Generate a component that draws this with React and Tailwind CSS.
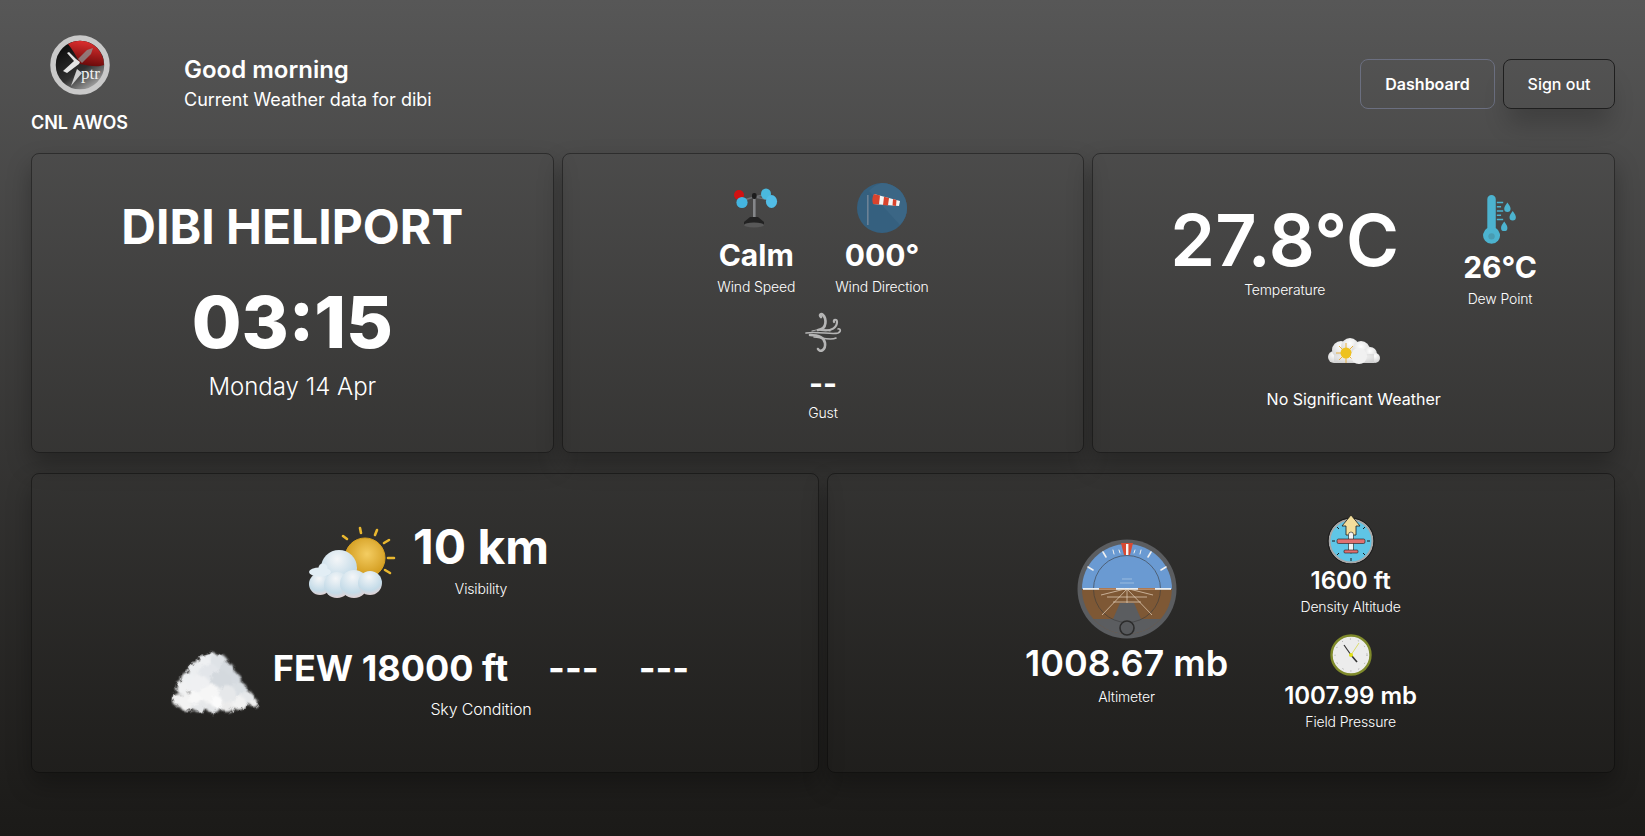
import React from 'react';

const Card = ({ className = '', children }) => (
  <div className={`h-[300px] rounded-lg border border-black/40 shadow-[0_12px_24px_rgba(0,0,0,0.28)] flex flex-col items-center justify-center ${className}`}>
    {children}
  </div>
);

const Label = ({ className = '', children }) => (
  <div className={`text-sm font-light tracking-[-0.01em] leading-5 text-white ${className}`}>{children}</div>
);

const Logo = () => (
  <svg width="60" height="60" viewBox="0 0 60 60">
    <defs>
      <linearGradient id="lgBase" x1="0.2" y1="0.1" x2="0.8" y2="1">
        <stop offset="0" stopColor="#0b0b0b" />
        <stop offset="0.55" stopColor="#303030" />
        <stop offset="1" stopColor="#c4c4c4" />
      </linearGradient>
      <linearGradient id="lgRed" x1="0.6" y1="0" x2="0.4" y2="1">
        <stop offset="0" stopColor="#e23030" />
        <stop offset="1" stopColor="#640808" />
      </linearGradient>
    </defs>
    <circle cx="30" cy="30" r="27" fill="url(#lgBase)" stroke="#c9c9c9" strokeWidth="5.5" />
    <path d="M18 9 A24 24 0 0 1 54 30 C46 33 38 30 30 29 C26 20 22 14 18 9 Z" fill="url(#lgRed)" />
    <path d="M28 24 L37 15 L43 13 L41 19 L32 28 Z" fill="#8e8e8e" opacity="0.8" />
    <path d="M13 36 L24 26 L17 18 L19 17 L26 24 L30 27 L29 29 L17 38 Z" fill="#e4e4e4" />
    <path d="M21 51 L27 34 L32 38 Z" fill="#cfcfcf" />
    <text x="31" y="44" fontFamily="'Liberation Serif', serif" fontSize="17" fill="#f0f0f0">ptr</text>
  </svg>
);

const Anemometer = () => (
  <svg width="44" height="40" viewBox="0 0 44 40">
    <rect x="19" y="7" width="2.6" height="24" fill="#85878a" />
    <path d="M7 13 L20 9 L34 6 M20 9 L37 12" stroke="#6e7073" strokeWidth="1.6" fill="none" />
    <ellipse cx="5" cy="7" rx="5" ry="5" fill="#cf1212" />
    <ellipse cx="8" cy="14.5" rx="5.6" ry="5.6" fill="#44b5e0" />
    <ellipse cx="32" cy="6" rx="5" ry="5.6" fill="#4ab9de" />
    <ellipse cx="37.5" cy="13.5" rx="5.6" ry="6.4" fill="#52bde6" />
    <rect x="18" y="5" width="4.6" height="6" rx="2" fill="#1c1c1c" />
    <path d="M16 29 H24 L30 34 V37 H10 V34 Z" fill="#222222" />
    <ellipse cx="20" cy="37" rx="10" ry="2.4" fill="#585858" />
  </svg>
);

const Windsock = () => (
  <svg width="50" height="50" viewBox="0 0 50 50">
    <circle cx="25" cy="25" r="25" fill="#35607f" />
    <path d="M25 0 A25 25 0 0 1 50 25 A25 25 0 0 1 43 42 L12 8 A25 25 0 0 1 25 0 Z" fill="#3b6685" />
    <rect x="10" y="12" width="1.6" height="30" fill="#6c8296" />
    <path d="M17 11 L43 18 L42 23 L16 21 Z" fill="#f4f4f4" />
    <path d="M17 11 C15 14 15 18 16 21 L22 21.5 L23 12.6 Z" fill="#d9432d" />
    <path d="M27 13.7 L26 22 L31 22.4 L32 15 Z" fill="#d9432d" />
    <path d="M36 16 L35.5 22.6 L39 22.9 L39.5 17 Z" fill="#d9432d" />
  </svg>
);

const Gusts = () => (
  <svg width="38" height="44" viewBox="0 0 38 44" fill="none" stroke="#b5b5b5" strokeLinecap="round">
    <path d="M14 21 C24 20 22 9 19 6 C17 4 15 6 17 8" strokeWidth="2.6" />
    <path d="M17 21 C28 23 33 18 33 13 C33 10 29 10 30 13" strokeWidth="2.2" />
    <path d="M2 24 C14 22 28 26 34 24 C38 22 36 19 34 20" strokeWidth="1.6" />
    <path d="M6 26 C14 26 20 28 21 34 C22 41 16 44 14 40" strokeWidth="2.6" />
    <path d="M8 22 C14 20 20 20 26 22" strokeWidth="1.2" />
    <path d="M10 28 C16 28 26 32 32 29" strokeWidth="1.6" />
  </svg>
);

const DewThermo = () => (
  <svg width="36" height="55" viewBox="0 0 34 52">
    <path d="M5 6 A4 4 0 0 1 13 6 V33 A8 8 0 1 1 5 33 Z" fill="#4cb3cf" />
    <circle cx="9" cy="41" r="3" fill="#3f3f3f" opacity="0.2" />
    <path d="M14 9 H20 M14 13 H18 M14 17 H20 M14 21 H18 M14 25 H20" stroke="#4cb3cf" strokeWidth="1.4" />
    <path d="M24 9 C26 12 27 13 27 15 A3 3 0 0 1 21 15 C21 13 22 12 24 9 Z" fill="#4cb3cf" />
    <path d="M29 17 C31 20 32 21 32 23 A3 3 0 0 1 26 23 C26 21 27 20 29 17 Z" fill="#4cb3cf" />
    <path d="M21 27 C23 30 24 31 24 33 A3 3 0 0 1 18 33 C18 31 19 30 21 27 Z" fill="#4cb3cf" />
  </svg>
);

const SunCloud = () => (
  <svg width="52" height="30" viewBox="0 0 52 30">
    <defs>
      <radialGradient id="sc1" cx="50%" cy="30%" r="70%">
        <stop offset="0" stopColor="#ffffff" />
        <stop offset="1" stopColor="#d2d2d2" />
      </radialGradient>
    </defs>
    <circle cx="6" cy="20" r="6" fill="url(#sc1)" />
    <circle cx="13" cy="13" r="9" fill="url(#sc1)" />
    <circle cx="22" cy="10" r="9" fill="url(#sc1)" />
    <circle cx="33" cy="13" r="9" fill="url(#sc1)" />
    <circle cx="42" cy="17" r="7" fill="url(#sc1)" />
    <circle cx="47" cy="21" r="5" fill="url(#sc1)" />
    <rect x="6" y="17" width="40" height="9" fill="url(#sc1)" />
    <g stroke="#e8a92c" strokeWidth="0.9">
      <path d="M18 6 V26 M8 16 H28 M11 9 L25 23 M25 9 L11 23" />
    </g>
    <circle cx="18" cy="16" r="5.5" fill="#eec21e" />
    <circle cx="31" cy="19" r="8" fill="#f1f1f1" />
  </svg>
);

const SunnyCloud3D = () => (
  <svg width="90" height="76" viewBox="0 0 90 76">
    <defs>
      <radialGradient id="sun" cx="55%" cy="40%" r="60%">
        <stop offset="0" stopColor="#f4cd62" />
        <stop offset="1" stopColor="#cf9718" />
      </radialGradient>
      <radialGradient id="c3" cx="45%" cy="25%" r="80%">
        <stop offset="0" stopColor="#f4f6f8" />
        <stop offset="0.7" stopColor="#c4dbe8" />
        <stop offset="1" stopColor="#e6cfcf" />
      </radialGradient>
      <filter id="softc"><feGaussianBlur stdDeviation="0.5" /></filter>
    </defs>
    <g stroke="#e9b72f" strokeWidth="2.6" strokeLinecap="round">
      <path d="M53 3 L54 8 M70 5 L68 10 M82 15 L77 18 M87 33 H81 M83 48 L78 45 M36 11 L40 14" />
    </g>
    <circle cx="58" cy="33" r="20" fill="url(#sun)" stroke="#d9a21f" strokeWidth="1" />
    <g filter="url(#softc)">
      <circle cx="32" cy="43" r="18" fill="url(#c3)" />
      <circle cx="13" cy="59" r="11" fill="url(#c3)" />
      <circle cx="30" cy="60" r="13" fill="url(#c3)" />
      <circle cx="47" cy="59" r="14" fill="url(#c3)" />
      <circle cx="63" cy="58" r="12" fill="url(#c3)" />
      <ellipse cx="13" cy="47" rx="11" ry="4.5" fill="#e2eef5" />
      <circle cx="16" cy="43" r="4.5" fill="#e2eef5" />
    </g>
  </svg>
);

// lumps of the big cloud: x, y, r, shade
const puffs = [
  [40, 9, 7, '#e9ecef'], [33, 13, 7, '#eef0f2'], [48, 12, 8, '#dfe3e7'], [56, 21, 8, '#d6dbe0'],
  [25, 21, 8, '#eceef0'], [62, 30, 8, '#d5dae0'], [17, 29, 7, '#eef0f2'], [12, 38, 7, '#f0f1f2'],
  [68, 40, 8, '#dadfe3'], [7, 50, 6, '#f2f2f2'], [76, 48, 7, '#e6e8ea'], [83, 53, 4, '#f0f0f0'],
  [16, 52, 9, '#f3f3f3'], [28, 54, 8, '#e6e8ea'], [42, 55, 8, '#e4e6e8'], [56, 54, 8, '#ebebeb'],
  [68, 53, 7, '#f2f2f2'], [38, 25, 11, '#e3e6ea'], [50, 32, 11, '#d4d9de'], [28, 36, 11, '#eff0f2'],
  [40, 44, 10, '#f6f6f6'], [56, 44, 9, '#e6e8ea'], [24, 48, 7, '#f8f8f8'], [46, 52, 6, '#fbfbfb'],
];

const FluffyCloud = () => (
  <svg width="90" height="68" viewBox="0 0 90 68">
    <defs>
      <filter id="fluff" x="-10%" y="-10%" width="120%" height="120%">
        <feGaussianBlur in="SourceGraphic" stdDeviation="1" result="soft" />
        <feTurbulence type="fractalNoise" baseFrequency="0.18" numOctaves="2" seed="4" result="noise" />
        <feDisplacementMap in="soft" in2="noise" scale="6" />
      </filter>
    </defs>
    <g filter="url(#fluff)">
      {puffs.map(([x, y, r, c], i) => (
        <circle key={i} cx={x} cy={y} r={r} fill={c} />
      ))}
    </g>
  </svg>
);

const Horizon = () => (
  <svg width="100" height="100" viewBox="0 0 100 100">
    <defs>
      <clipPath id="face"><circle cx="50" cy="50" r="45" /></clipPath>
    </defs>
    <circle cx="50" cy="50" r="49.5" fill="#5b5d60" />
    <g clipPath="url(#face)">
      <rect x="0" y="0" width="100" height="50" fill="#6a9ad2" />
      <rect x="0" y="50" width="100" height="50" fill="#7e5835" />
      <rect x="0" y="80" width="100" height="20" fill="#5b5d60" />
    </g>
    <circle cx="50" cy="50" r="33.5" fill="none" stroke="#3a3a3a" strokeWidth="0.6" />
    <rect x="6" y="49" width="88" height="1.8" fill="#e9eef2" />
    <rect x="22" y="49" width="17" height="1.8" fill="#b07a52" />
    <rect x="61" y="49" width="17" height="1.8" fill="#b07a52" />
    <g stroke="#f0f0f0" strokeLinecap="round">
      <path d="M16 31 L11 28 M84 31 L89 28" strokeWidth="1.6" />
      <path d="M29 18 L26 13 M71 18 L74 13" strokeWidth="1.6" />
      <path d="M37 15 L36 11 M63 15 L64 11 M43 14 L42 11 M57 14 L58 11" strokeWidth="1" />
    </g>
    <path d="M44 4 H56 L53 16 H47 Z" fill="#d84a33" />
    <rect x="49" y="5" width="2.4" height="11" fill="#f6f6f6" />
    <g stroke="#e6d4be" strokeWidth="0.7" fill="none">
      <path d="M50 50 L25 76 M50 50 L75 76 M50 50 V66 M30 58 H70 M24 56 L48 50 M76 56 L52 50 M36 63 H64" />
    </g>
    <path d="M43 64 H57 L64 80 H36 Z" fill="#5b5d60" />
    <g stroke="#a6c4e2" strokeWidth="0.8" fill="none">
      <path d="M45 40 H55 M43 44 H57" />
    </g>
    <circle cx="50" cy="89" r="7" fill="#57595c" stroke="#2c2c2c" strokeWidth="1.6" />
  </svg>
);

const DensityIcon = () => (
  <svg width="48" height="50" viewBox="0 0 48 50">
    <circle cx="24" cy="27" r="21.5" fill="#5fc5e6" stroke="#a8a8a8" strokeWidth="2" />
    <circle cx="24" cy="27" r="23" fill="none" stroke="#1a1a1a" strokeWidth="1" />
    <path d="M24 44 V47 M5 27 H8 M40 27 H43 M10 13 L12 15 M38 13 L36 15 M10 41 L12 39 M38 41 L36 39" stroke="#1a1a1a" strokeWidth="1" />
    <path d="M24 1 L33 12 H29 V21 H19 V12 H15 Z" fill="#f3de9c" stroke="#1a1a1a" strokeWidth="0.8" />
    <rect x="21.5" y="18" width="5" height="21" rx="2.5" fill="#f4f4f4" stroke="#1a1a1a" strokeWidth="0.6" />
    <rect x="10" y="25" width="28" height="4.5" rx="1.5" fill="#e07070" stroke="#1a1a1a" strokeWidth="0.6" />
    <rect x="17" y="36" width="14" height="3" rx="1" fill="#e07070" stroke="#1a1a1a" strokeWidth="0.6" />
  </svg>
);

const ClockGauge = () => (
  <svg width="42" height="42" viewBox="0 0 42 42">
    <circle cx="21" cy="21" r="19.5" fill="#ececec" stroke="#7f8a2b" strokeWidth="2.4" />
    <g stroke="#9a9a9a" strokeWidth="1" strokeDasharray="1 7.2">
      <circle cx="21" cy="21" r="16" fill="none" />
    </g>
    <path d="M21 21 L14 11" stroke="#333" strokeWidth="1.2" />
    <path d="M21 21 L27 28" stroke="#333" strokeWidth="1.6" />
    <path d="M21 21 L29 9" stroke="#d6d64a" strokeWidth="0.8" />
    <circle cx="21" cy="21" r="2" fill="#dfe012" />
  </svg>
);

export default function App() {
  return (
    <div className="min-h-screen h-[836px] overflow-hidden bg-gradient-to-b from-[#575757] to-[#1b1a18] text-white pl-[31px] pr-[30px] font-['Inter',sans-serif]">
      {/* Header */}
      <div className="flex items-start justify-between h-[153px]">
        <div className="flex items-start">
          <div className="flex flex-col items-center pt-[35px] w-[97px]">
            <Logo />
            <div className="text-lg font-semibold leading-7 mt-[14px] whitespace-nowrap">CNL AWOS</div>
          </div>
          <div className="ml-[56px] pt-[54px]">
            <div className="text-2xl font-semibold leading-8">Good morning</div>
            <div className="text-lg leading-7">Current Weather data for dibi</div>
          </div>
        </div>
        <div className="flex gap-2 pt-[59px]">
          <button className="h-[50px] w-[135px] rounded-lg border border-[#6b6f80] font-semibold text-base">Dashboard</button>
          <button className="h-[50px] w-[112px] rounded-lg border border-[#1f1f1f] text-base font-medium shadow-[0_20px_25px_-5px_rgba(0,0,0,0.2)]">Sign out</button>
        </div>
      </div>

      {/* Top row */}
      <div className="grid grid-cols-3 gap-2">
        <Card>
          <div className="text-5xl font-bold leading-none">DIBI HELIPORT</div>
          <div className="text-7xl font-extrabold leading-none mt-[35px]">03:15</div>
          <div className="text-2xl font-light leading-8 mt-[13px]">Monday 14 Apr</div>
        </Card>

        <Card>
          <div className="flex gap-10">
            <div className="flex flex-col items-center">
              <div className="h-[50px] flex items-center"><Anemometer /></div>
              <div className="text-3xl font-bold leading-9 mt-[4px]">Calm</div>
              <Label className="mt-[4px]">Wind Speed</Label>
            </div>
            <div className="flex flex-col items-center">
              <Windsock />
              <div className="text-3xl font-bold leading-9 mt-[4px]">000°</div>
              <Label className="mt-[4px]">Wind Direction</Label>
            </div>
          </div>
          <div className="flex flex-col items-center mt-[12px]">
            <Gusts />
            <div className="text-3xl font-bold leading-9 mt-[12px]">--</div>
            <Label className="mt-[2px]">Gust</Label>
          </div>
        </Card>

        <Card className="pb-[2px]">
          <div className="flex items-start gap-[64px]">
            <div className="flex flex-col items-center pt-[11px]">
              <div className="text-7xl font-semibold leading-[72px]">27.8°C</div>
              <Label className="mt-[4px]">Temperature</Label>
            </div>
            <div className="flex flex-col items-center">
              <DewThermo />
              <div className="text-3xl font-bold leading-9 mt-[1px]">26°C</div>
              <Label className="mt-[4px]">Dew Point</Label>
            </div>
          </div>
          <div className="flex flex-col items-center mt-[28px]">
            <SunCloud />
            <div className="text-base font-normal leading-6 mt-[20px]">No Significant Weather</div>
          </div>
        </Card>
      </div>

      {/* Bottom row */}
      <div className="grid grid-cols-2 gap-2 mt-[20px]">
        <Card>
          <div className="flex items-start ml-[6px]">
            <div className="mt-[8px]"><SunnyCloud3D /></div>
            <div className="flex flex-col items-center ml-[16px]">
              <div className="text-5xl font-bold leading-[60px]">10 km</div>
              <Label className="mt-[2px]">Visibility</Label>
            </div>
          </div>
          <div className="flex items-start mt-[47px] pb-[8px] ml-[6px]">
            <div className="mt-[2px] ml-[4px]"><FluffyCloud /></div>
            <div className="flex flex-col items-center ml-[12px]">
              <div className="flex gap-[40px] text-4xl font-bold leading-10 whitespace-nowrap">
                <span>FEW 18000 ft</span>
                <span>---</span>
                <span>---</span>
              </div>
              <div className="text-base font-light tracking-[-0.01em] leading-6 mt-[9px]">Sky Condition</div>
            </div>
          </div>
        </Card>

        <Card>
          <div className="flex items-center gap-[56px]">
            <div className="flex flex-col items-center">
              <Horizon />
              <div className="text-4xl font-semibold leading-10 mt-[4px]">1008.67 mb</div>
              <Label className="mt-[4px]">Altimeter</Label>
            </div>
            <div className="flex flex-col items-center">
              <DensityIcon />
              <div className="text-2xl font-semibold leading-8 mt-[1px]">1600 ft</div>
              <Label>Density Altitude</Label>
              <div className="mt-[17px]"><ClockGauge /></div>
              <div className="text-2xl font-semibold leading-8 mt-[4px]">1007.99 mb</div>
              <Label>Field Pressure</Label>
            </div>
          </div>
        </Card>
      </div>
    </div>
  );
}
